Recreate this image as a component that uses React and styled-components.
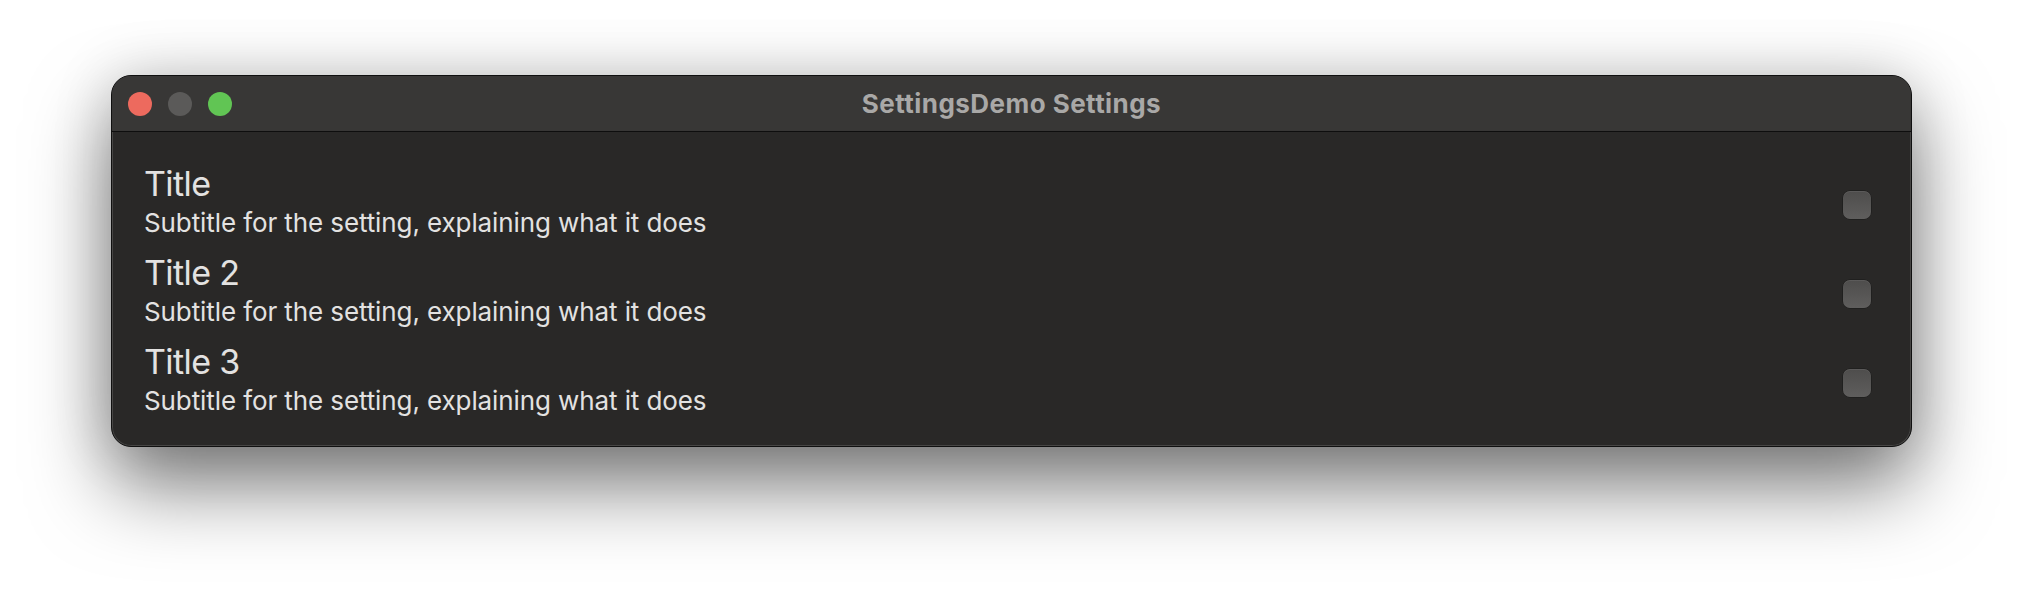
import React from 'react'
import styled, { createGlobalStyle } from 'styled-components'

const GlobalStyle = createGlobalStyle`
  html, body {
    margin: 0;
    padding: 0;
    background: #ffffff;
    font-family: Inter, "Noto Sans", "Liberation Sans", sans-serif;
  }
  * {
    box-sizing: border-box;
  }
`

const settings = [
  { title: 'Title', subtitle: 'Subtitle for the setting, explaining what it does' },
  { title: 'Title 2', subtitle: 'Subtitle for the setting, explaining what it does' },
  { title: 'Title 3', subtitle: 'Subtitle for the setting, explaining what it does' }
]

const App = () => {
  return (
    <>
      <GlobalStyle />
      <Desktop>
        <Window>
          <TitleBar>
            <Lights>
              <Light color="#ed6a5e" />
              <Light color="#5b5a59" />
              <Light color="#61c554" />
            </Lights>
            <WindowTitle>SettingsDemo Settings</WindowTitle>
          </TitleBar>
          <Content>
            {settings.map(s => (
              <Row key={s.title}>
                <TextBlock>
                  <Title>{s.title}</Title>
                  <Subtitle>{s.subtitle}</Subtitle>
                </TextBlock>
                <Checkbox type="checkbox" />
              </Row>
            ))}
          </Content>
        </Window>
      </Desktop>
    </>
  )
}

const Desktop = styled.div`
  width: 2024px;
  height: 596px;
  padding: 75px 0 0 111px;
  overflow: hidden;
`

const Window = styled.div`
  width: 1801px;
  border: 1px solid #101010;
  border-radius: 20px;
  overflow: hidden;
  background: #292827;
  box-shadow: inset 0 0 0 1px rgba(255, 255, 255, 0.14),
    0 40px 80px rgba(0, 0, 0, 0.5), 0 0 60px rgba(0, 0, 0, 0.16);
`

const TitleBar = styled.div`
  position: relative;
  height: 56px;
  display: flex;
  align-items: center;
  justify-content: center;
  background: #383736;
  border-bottom: 1px solid #0e0e0e;
`

const Lights = styled.div`
  position: absolute;
  left: 16px;
  top: 0;
  bottom: 0;
  display: flex;
  align-items: center;
  gap: 16px;
`

const Light = styled.span`
  width: 24px;
  height: 24px;
  border-radius: 50%;
  background: ${props => props.color};
`

const WindowTitle = styled.div`
  font-size: 26px;
  font-weight: 700;
  color: #a9a8a7;
  letter-spacing: 0.45px;
`

const Content = styled.div`
  padding: 33px 40px 14px 32px;
`

const Row = styled.div`
  display: flex;
  align-items: flex-start;
  justify-content: space-between;
  height: 89px;
`

const TextBlock = styled.div`
  display: flex;
  flex-direction: column;
`

const Title = styled.div`
  font-size: 34px;
  line-height: 38px;
  letter-spacing: -0.6px;
  color: #e3e2e1;
`

const Subtitle = styled.div`
  margin-top: 3px;
  font-size: 26px;
  line-height: 34px;
  letter-spacing: -0.1px;
  color: #e3e2e1;
`

const Checkbox = styled.input`
  appearance: none;
  margin: 26px 0 0 0;
  width: 28px;
  height: 28px;
  border-radius: 7px;
  background: linear-gradient(#4e4d4c, #5f5e5d);
  box-shadow: inset 0 1px 0 rgba(255, 255, 255, 0.08), 0 0 0 0.5px rgba(0, 0, 0, 0.4);
`

export default App
